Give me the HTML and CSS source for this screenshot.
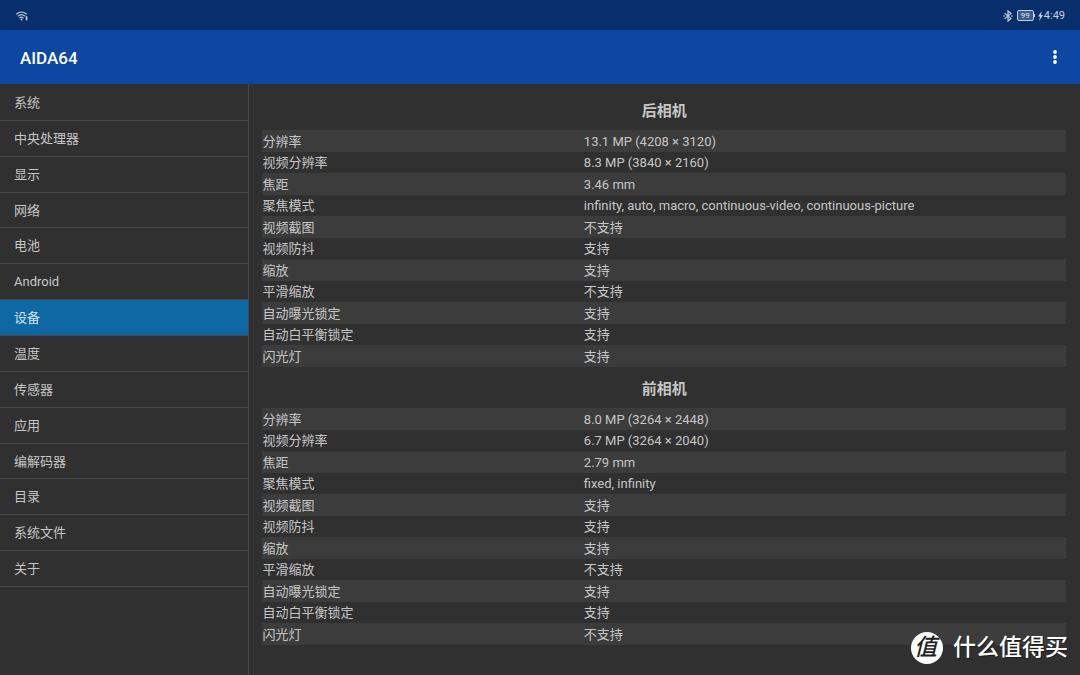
FILE: index.html
```html
<!DOCTYPE html>
<html lang="zh-CN">
<head>
<meta charset="utf-8">
<meta name="viewport" content="width=device-width, initial-scale=1">
<title>AIDA64</title>
<link rel="stylesheet" href="styles.css">
</head>
<body>
<div class="status-bar">
  <svg width="12" height="10" viewBox="0 0 12 10" fill="none" stroke="currentColor" stroke-linecap="round" aria-hidden="true">
    <path d="M.6 3Q5.5-1 10.4 3M2.2 5Q5.5 2.2 8.8 5M3.8 6.8Q5.5 5.4 7.2 6.8" stroke-width="1.1"/>
    <circle cx="5.5" cy="8.5" r=".9" fill="currentColor" stroke="none"/>
    <path d="M10.6 5.8V8.8" stroke-width="1.6"/>
  </svg>
  <div class="status-right">
    <svg width="10" height="12" viewBox="0 0 10 12" fill="none" stroke="currentColor" stroke-width="1.2" aria-hidden="true">
      <path d="M1.6 3.2L8 8.4L5 11V1L8 3.6L1.6 8.8"/>
      <circle cx="1" cy="6" r=".8" fill="currentColor" stroke="none"/>
      <circle cx="9" cy="6" r=".8" fill="currentColor" stroke="none"/>
    </svg>
    <span class="battery">99</span>
    <svg width="5" height="10" viewBox="0 0 5 10" fill="currentColor" aria-hidden="true"><path d="M3.8 0L0 5.6H2L1.2 10L5 4.1H2.9Z"/></svg>
    <span class="clock">4:49</span>
  </div>
</div>
<header class="app-bar">
  <h1 class="app-title">AIDA64</h1>
  <button class="menu-button" type="button" aria-label="更多选项">
    <svg width="4" height="14" viewBox="0 0 4 14" fill="currentColor" aria-hidden="true"><circle cx="2" cy="2" r="1.9"/><circle cx="2" cy="7" r="1.9"/><circle cx="2" cy="12" r="1.9"/></svg>
  </button>
</header>
<div class="layout">
  <nav class="sidebar">
    <a class="nav-item" href="#">系统</a>
    <a class="nav-item" href="#">中央处理器</a>
    <a class="nav-item" href="#">显示</a>
    <a class="nav-item" href="#">网络</a>
    <a class="nav-item" href="#">电池</a>
    <a class="nav-item" href="#">Android</a>
    <a class="nav-item nav-item-active" href="#" aria-current="page">设备</a>
    <a class="nav-item" href="#">温度</a>
    <a class="nav-item" href="#">传感器</a>
    <a class="nav-item" href="#">应用</a>
    <a class="nav-item" href="#">编解码器</a>
    <a class="nav-item" href="#">目录</a>
    <a class="nav-item" href="#">系统文件</a>
    <a class="nav-item" href="#">关于</a>
  </nav>
  <main class="content">
    <h2 class="section-title">后相机</h2>
    <table class="specs">
      <tr><th scope="row">分辨率</th><td>13.1 MP (4208 × 3120)</td></tr>
      <tr><th scope="row">视频分辨率</th><td>8.3 MP (3840 × 2160)</td></tr>
      <tr><th scope="row">焦距</th><td>3.46 mm</td></tr>
      <tr><th scope="row">聚焦模式</th><td>infinity, auto, macro, continuous-video, continuous-picture</td></tr>
      <tr><th scope="row">视频截图</th><td>不支持</td></tr>
      <tr><th scope="row">视频防抖</th><td>支持</td></tr>
      <tr><th scope="row">缩放</th><td>支持</td></tr>
      <tr><th scope="row">平滑缩放</th><td>不支持</td></tr>
      <tr><th scope="row">自动曝光锁定</th><td>支持</td></tr>
      <tr><th scope="row">自动白平衡锁定</th><td>支持</td></tr>
      <tr><th scope="row">闪光灯</th><td>支持</td></tr>
    </table>
    <h2 class="section-title">前相机</h2>
    <table class="specs">
      <tr><th scope="row">分辨率</th><td>8.0 MP (3264 × 2448)</td></tr>
      <tr><th scope="row">视频分辨率</th><td>6.7 MP (3264 × 2040)</td></tr>
      <tr><th scope="row">焦距</th><td>2.79 mm</td></tr>
      <tr><th scope="row">聚焦模式</th><td>fixed, infinity</td></tr>
      <tr><th scope="row">视频截图</th><td>支持</td></tr>
      <tr><th scope="row">视频防抖</th><td>支持</td></tr>
      <tr><th scope="row">缩放</th><td>支持</td></tr>
      <tr><th scope="row">平滑缩放</th><td>不支持</td></tr>
      <tr><th scope="row">自动曝光锁定</th><td>支持</td></tr>
      <tr><th scope="row">自动白平衡锁定</th><td>支持</td></tr>
      <tr><th scope="row">闪光灯</th><td>不支持</td></tr>
    </table>
  </main>
</div>
<div class="watermark"><span class="watermark-badge">值</span><span>什么值得买</span></div>
</body>
</html>
```
FILE: styles.css
```css
* {
  box-sizing: border-box;
}

body {
  display: flex;
  flex-direction: column;
  min-height: 100vh;
  margin: 0;
  background: #303030;
  color: #c6c6c6;
  font: 13px/20px Roboto, "Noto Sans CJK SC", sans-serif;
}

.status-bar {
  display: flex;
  align-items: center;
  justify-content: space-between;
  height: 30px;
  padding: 1px 15px 0 16px;
  background: #082e6b;
  color: #c5d0e3;
}

.status-right {
  display: flex;
  align-items: center;
  gap: 4px;
}

.battery {
  position: relative;
  width: 17px;
  height: 11px;
  border: 1px solid currentColor;
  border-radius: 2px;
  background: #3d5a8b;
  font-size: 8px;
  font-weight: 500;
  line-height: 9px;
  text-align: center;
}

.battery::after {
  content: "";
  position: absolute;
  top: 3px;
  right: -2px;
  width: 1px;
  height: 3px;
  background: currentColor;
}

.clock {
  margin-left: -3px;
  font-size: 11px;
}

.app-bar {
  display: flex;
  align-items: center;
  justify-content: space-between;
  height: 54px;
  padding: 0 15px 0 20px;
  background: #0d47a1;
  color: #fff;
}

.app-title {
  margin: 0;
  padding-top: 2px;
  font-size: 17px;
  font-weight: 500;
}

.menu-button {
  display: flex;
  justify-content: center;
  width: 20px;
  padding: 8px 0;
  border: 0;
  background: none;
  color: inherit;
}

.layout {
  display: grid;
  grid-template-columns: 23% 1fr;
  flex: 1;
}

.sidebar {
  padding-top: 1px;
}

.nav-item {
  display: flex;
  align-items: center;
  height: 36px;
  padding: 1px 14px 0;
  border-bottom: 1px solid #484848;
  color: inherit;
  text-decoration: none;
}

.nav-item:nth-child(7n + 4) {
  height: 35px;
}

.nav-item-active {
  background: #0e68a3;
  color: #d5e3ee;
}

.content {
  padding: 5px 14px 0 13px;
  border-left: 1px solid #484848;
}

.section-title {
  margin: 0;
  padding: 12px 0 9px;
  font-size: 15px;
  font-weight: 700;
  line-height: 20px;
  text-align: center;
}

.specs {
  width: 100%;
  table-layout: fixed;
  border-collapse: collapse;
}

.specs tr {
  height: 21px;
}

.specs tr:nth-child(odd) {
  height: 22px;
  background: #3c3c3c;
}

.specs th,
.specs td {
  padding: 1px 0 0;
  font-weight: 400;
  text-align: left;
}

.specs th {
  width: 40%;
}

.watermark {
  position: absolute;
  right: 12px;
  bottom: 11px;
  display: flex;
  align-items: center;
  gap: 10px;
  color: #fff;
  font-size: 23px;
  font-weight: 500;
  line-height: 32px;
  text-shadow: 1px 1px 1px #1c1c1c;
}

.watermark-badge {
  width: 32px;
  height: 32px;
  padding-right: 3px;
  border-radius: 50%;
  background: #fff;
  color: #222;
  font-style: italic;
  text-align: center;
  text-shadow: none;
}
```
